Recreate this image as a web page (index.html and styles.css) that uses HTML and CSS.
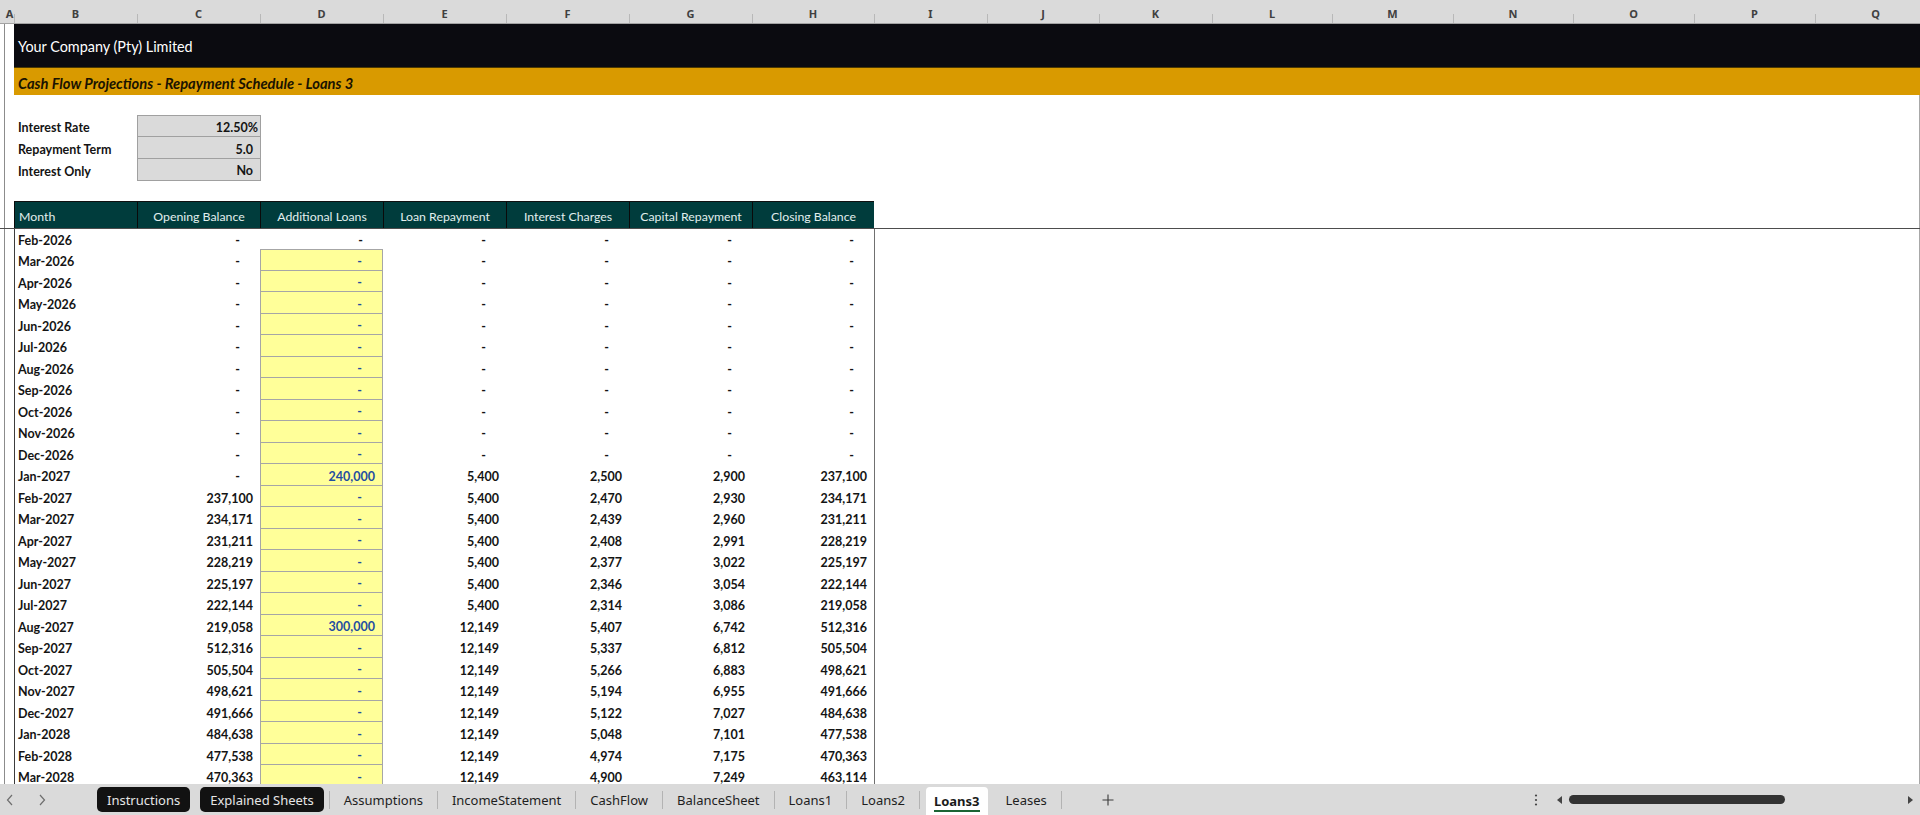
FILE: index.html
```html
<!DOCTYPE html>
<html>
<head>
<meta charset="utf-8">
<title>Loans3</title>
<link rel="stylesheet" href="styles.css">
</head>
<body>
<div class="app">
  <div class="colhead">
    <div class="ch w-a">A</div>
    <div class="ch w-b">B</div>
    <div class="ch w-c">C</div>
    <div class="ch w-c">D</div>
    <div class="ch w-c">E</div>
    <div class="ch w-c">F</div>
    <div class="ch w-c">G</div>
    <div class="ch w-h">H</div>
    <div class="ch w-i">I</div>
    <div class="ch w-j">J</div>
    <div class="ch w-i">K</div>
    <div class="ch w-l">L</div>
    <div class="ch w-m">M</div>
    <div class="ch w-l">N</div>
    <div class="ch w-m">O</div>
    <div class="ch w-m">P</div>
    <div class="ch w-m">Q</div>
  </div>

  <div class="sheet">
    <div class="band-black">Your Company (Pty) Limited</div>
    <div class="band-gold">Cash Flow Projections - Repayment Schedule - Loans 3</div>

    <div class="params">
      <div class="prow"><div class="plabel">Interest Rate</div><div class="pval pfirst">12.50%</div></div>
      <div class="prow"><div class="plabel">Repayment Term</div><div class="pval pind">5.0</div></div>
      <div class="prow plast"><div class="plabel">Interest Only</div><div class="pval pind">No</div></div>
    </div>

    <div class="thead-wrap">
      <div class="thead">
        <div class="th th-left">Month</div>
        <div class="th">Opening Balance</div>
        <div class="th">Additional Loans</div>
        <div class="th">Loan Repayment</div>
        <div class="th">Interest Charges</div>
        <div class="th">Capital Repayment</div>
        <div class="th">Closing Balance</div>
      </div>
    </div>

    <div class="tbody">
      <div class="tr first"><div class="td m">Feb-2026</div><div class="td z">-</div><div class="td z">-</div><div class="td z">-</div><div class="td z">-</div><div class="td z">-</div><div class="td z">-</div></div>
      <div class="tr"><div class="td m">Mar-2026</div><div class="td z">-</div><div class="td y yt z">-</div><div class="td z">-</div><div class="td z">-</div><div class="td z">-</div><div class="td z">-</div></div>
      <div class="tr"><div class="td m">Apr-2026</div><div class="td z">-</div><div class="td y z">-</div><div class="td z">-</div><div class="td z">-</div><div class="td z">-</div><div class="td z">-</div></div>
      <div class="tr"><div class="td m">May-2026</div><div class="td z">-</div><div class="td y z">-</div><div class="td z">-</div><div class="td z">-</div><div class="td z">-</div><div class="td z">-</div></div>
      <div class="tr"><div class="td m">Jun-2026</div><div class="td z">-</div><div class="td y z">-</div><div class="td z">-</div><div class="td z">-</div><div class="td z">-</div><div class="td z">-</div></div>
      <div class="tr"><div class="td m">Jul-2026</div><div class="td z">-</div><div class="td y z">-</div><div class="td z">-</div><div class="td z">-</div><div class="td z">-</div><div class="td z">-</div></div>
      <div class="tr"><div class="td m">Aug-2026</div><div class="td z">-</div><div class="td y z">-</div><div class="td z">-</div><div class="td z">-</div><div class="td z">-</div><div class="td z">-</div></div>
      <div class="tr"><div class="td m">Sep-2026</div><div class="td z">-</div><div class="td y z">-</div><div class="td z">-</div><div class="td z">-</div><div class="td z">-</div><div class="td z">-</div></div>
      <div class="tr"><div class="td m">Oct-2026</div><div class="td z">-</div><div class="td y z">-</div><div class="td z">-</div><div class="td z">-</div><div class="td z">-</div><div class="td z">-</div></div>
      <div class="tr"><div class="td m">Nov-2026</div><div class="td z">-</div><div class="td y z">-</div><div class="td z">-</div><div class="td z">-</div><div class="td z">-</div><div class="td z">-</div></div>
      <div class="tr"><div class="td m">Dec-2026</div><div class="td z">-</div><div class="td y z">-</div><div class="td z">-</div><div class="td z">-</div><div class="td z">-</div><div class="td z">-</div></div>
      <div class="tr"><div class="td m">Jan-2027</div><div class="td z">-</div><div class="td y n">240,000</div><div class="td n">5,400</div><div class="td n">2,500</div><div class="td n">2,900</div><div class="td n">237,100</div></div>
      <div class="tr"><div class="td m">Feb-2027</div><div class="td n">237,100</div><div class="td y z">-</div><div class="td n">5,400</div><div class="td n">2,470</div><div class="td n">2,930</div><div class="td n">234,171</div></div>
      <div class="tr"><div class="td m">Mar-2027</div><div class="td n">234,171</div><div class="td y z">-</div><div class="td n">5,400</div><div class="td n">2,439</div><div class="td n">2,960</div><div class="td n">231,211</div></div>
      <div class="tr"><div class="td m">Apr-2027</div><div class="td n">231,211</div><div class="td y z">-</div><div class="td n">5,400</div><div class="td n">2,408</div><div class="td n">2,991</div><div class="td n">228,219</div></div>
      <div class="tr"><div class="td m">May-2027</div><div class="td n">228,219</div><div class="td y z">-</div><div class="td n">5,400</div><div class="td n">2,377</div><div class="td n">3,022</div><div class="td n">225,197</div></div>
      <div class="tr"><div class="td m">Jun-2027</div><div class="td n">225,197</div><div class="td y z">-</div><div class="td n">5,400</div><div class="td n">2,346</div><div class="td n">3,054</div><div class="td n">222,144</div></div>
      <div class="tr"><div class="td m">Jul-2027</div><div class="td n">222,144</div><div class="td y z">-</div><div class="td n">5,400</div><div class="td n">2,314</div><div class="td n">3,086</div><div class="td n">219,058</div></div>
      <div class="tr"><div class="td m">Aug-2027</div><div class="td n">219,058</div><div class="td y n">300,000</div><div class="td n">12,149</div><div class="td n">5,407</div><div class="td n">6,742</div><div class="td n">512,316</div></div>
      <div class="tr"><div class="td m">Sep-2027</div><div class="td n">512,316</div><div class="td y z">-</div><div class="td n">12,149</div><div class="td n">5,337</div><div class="td n">6,812</div><div class="td n">505,504</div></div>
      <div class="tr"><div class="td m">Oct-2027</div><div class="td n">505,504</div><div class="td y z">-</div><div class="td n">12,149</div><div class="td n">5,266</div><div class="td n">6,883</div><div class="td n">498,621</div></div>
      <div class="tr"><div class="td m">Nov-2027</div><div class="td n">498,621</div><div class="td y z">-</div><div class="td n">12,149</div><div class="td n">5,194</div><div class="td n">6,955</div><div class="td n">491,666</div></div>
      <div class="tr"><div class="td m">Dec-2027</div><div class="td n">491,666</div><div class="td y z">-</div><div class="td n">12,149</div><div class="td n">5,122</div><div class="td n">7,027</div><div class="td n">484,638</div></div>
      <div class="tr"><div class="td m">Jan-2028</div><div class="td n">484,638</div><div class="td y z">-</div><div class="td n">12,149</div><div class="td n">5,048</div><div class="td n">7,101</div><div class="td n">477,538</div></div>
      <div class="tr"><div class="td m">Feb-2028</div><div class="td n">477,538</div><div class="td y z">-</div><div class="td n">12,149</div><div class="td n">4,974</div><div class="td n">7,175</div><div class="td n">470,363</div></div>
      <div class="tr"><div class="td m">Mar-2028</div><div class="td n">470,363</div><div class="td y z">-</div><div class="td n">12,149</div><div class="td n">4,900</div><div class="td n">7,249</div><div class="td n">463,114</div></div>
    </div>
  </div>

  <div class="tabbar">
    <div class="navs">
      <svg class="chev" width="8" height="12" viewBox="0 0 8 12"><polyline points="6,1 1.5,6 6,11" fill="none" stroke="#6e6e6e" stroke-width="1.2"/></svg>
      <svg class="chev chev2" width="8" height="12" viewBox="0 0 8 12"><polyline points="2,1 6.5,6 2,11" fill="none" stroke="#6e6e6e" stroke-width="1.2"/></svg>
    </div>
    <div class="tab dark">Instructions</div>
    <div class="tab dark dark2">Explained Sheets</div>
    <div class="sep"></div>
    <div class="tab">Assumptions</div>
    <div class="sep"></div>
    <div class="tab">IncomeStatement</div>
    <div class="sep"></div>
    <div class="tab">CashFlow</div>
    <div class="sep"></div>
    <div class="tab">BalanceSheet</div>
    <div class="sep"></div>
    <div class="tab">Loans1</div>
    <div class="sep"></div>
    <div class="tab">Loans2</div>
    <div class="sep"></div>
    <div class="tab active"><span class="active-label">Loans3</span></div>
    <div class="tab leases">Leases</div>
    <div class="sep"></div>
    <div class="plus">
      <svg width="12" height="12" viewBox="0 0 12 12"><path d="M6 0.5V11.5M0.5 6H11.5" stroke="#3a3a3a" stroke-width="1.1" fill="none"/></svg>
    </div>
    <div class="spacer"></div>
    <div class="scroll">
      <svg class="vdots" width="4" height="14" viewBox="0 0 4 14"><circle cx="2" cy="2.5" r="1.1" fill="#444"/><circle cx="2" cy="7" r="1.1" fill="#444"/><circle cx="2" cy="11.5" r="1.1" fill="#444"/></svg>
      <svg class="tri-l" width="5" height="8" viewBox="0 0 5 8"><polygon points="5,0 0,4 5,8" fill="#444"/></svg>
      <div class="thumb"></div>
      <div class="spacer"></div>
      <svg class="tri-r" width="5" height="8" viewBox="0 0 5 8"><polygon points="0,0 5,4 0,8" fill="#444"/></svg>
    </div>
  </div>
</div>
</body>
</html>
```

FILE: styles.css
```css
* { box-sizing: border-box; }
html, body { margin: 0; padding: 0; }
body {
  width: 1920px;
  height: 815px;
  overflow: hidden;
  background: #ffffff;
  font-family: Lato, "Open Sans", sans-serif;
  color: #141414;
}
.app { display: flex; flex-direction: column; height: 815px; }

/* column letters */
.colhead {
  flex: 0 0 24px;
  display: flex;
  overflow: hidden;
  background: #dadada;
  border-bottom: 1px solid #a3a3a3;
}
.ch {
  position: relative;
  flex: 0 0 auto;
  display: flex;
  align-items: flex-end;
  justify-content: center;
  padding-bottom: 2px;
  font-family: "Noto Sans", sans-serif;
  font-weight: 700;
  font-size: 11px;
  color: #404040;
}
.ch::before {
  content: "";
  position: absolute;
  left: 0;
  bottom: 0;
  width: 1px;
  height: 9px;
  background: #b8b8b8;
}
.w-a { width: 14px; padding-left: 5px; }
.w-a::before { display: none; }
.w-b { width: 123px; }
.w-c { width: 123px; }
.w-h { width: 122px; }
.w-i { width: 113px; }
.w-j { width: 112px; }
.w-l { width: 120px; }
.w-m { width: 121px; }

/* sheet body */
.sheet {
  flex: 1 1 auto;
  overflow: hidden;
  background:
    linear-gradient(#8c8c8c, #8c8c8c) 4px 0 / 1px 100% no-repeat,
    linear-gradient(#a8a8a8, #a8a8a8) 1919px 0 / 1px 100% no-repeat,
    #ffffff;
}
.band-black {
  margin-left: 14px;
  height: 43px;
  background: #0b0b10;
  color: #ffffff;
  display: flex;
  align-items: center;
  padding: 2px 0 0 4px;
  font-size: 14.4px;
}
.band-gold {
  margin-left: 14px;
  height: 28px;
  background: #d99a00;
  border-top: 1px solid #4d3a00;
  color: #1a1300;
  display: flex;
  align-items: center;
  padding: 2px 0 0 4px;
  font-size: 14.7px;
  font-style: italic;
  font-weight: 700;
}

.params { margin-top: 20px; }
.prow { display: flex; height: 22px; padding-left: 14px; }
.prow.plast { height: 21.5px; }
.plabel {
  width: 123px;
  padding: 3px 0 0 4px;
  display: flex;
  align-items: center;
  font-weight: 700;
  font-size: 12.5px;
}
.pval {
  width: 124px;
  background: #dadada;
  border: 1px solid #a0a0a0;
  border-top: none;
  display: flex;
  align-items: center;
  justify-content: flex-end;
  padding: 3px 2px 0 0;
  font-weight: 700;
  font-size: 12.5px;
}
.pval.pfirst { border-top: 1px solid #a0a0a0; }
.pval.pind { padding-right: 7px; }

.thead-wrap {
  margin-top: 20px;
  padding-left: 14px;
  border-bottom: 1px solid #4d4d4d;
}
.thead {
  display: grid;
  grid-template-columns: 123px 123px 123px 123px 123px 123px 122px;
  width: 860px;
  height: 27px;
  border-top: 1px solid #101010;
}
.th {
  background: #003c3c;
  color: #e2efee;
  border-left: 1px solid #0a0a0a;
  display: flex;
  align-items: center;
  justify-content: center;
  padding-top: 3px;
  font-size: 12.3px;
  white-space: nowrap;
}
.th-left { justify-content: flex-start; padding-left: 4px; }

.tbody {
  margin-left: 14px;
  width: 861px;
  height: 600px;
  border-left: 1px solid #3c3c3c;
  border-right: 1px solid #707070;
}
.tr {
  display: grid;
  grid-template-columns: 122px 123px 123px 123px 123px 123px 122px;
  height: 21.5px;
}
.tr.first { height: 20.5px; }
.td {
  display: flex;
  align-items: center;
  padding-top: 4px;
  font-weight: 700;
  font-size: 12.5px;
  white-space: nowrap;
}
.td.m { padding-left: 3px; }
.td.n { justify-content: flex-end; padding-right: 7px; }
.td.z { justify-content: flex-end; padding-right: 20px; }
.td.y {
  background: #ffff99;
  color: #1f4ea1;
  border-left: 1px solid #a6a6a6;
  border-right: 1px solid #a6a6a6;
  border-bottom: 1px solid #a6a6a6;
}
.td.y.yt { border-top: 1px solid #a6a6a6; }

/* sheet tabs */
.tabbar {
  flex: 0 0 31px;
  display: flex;
  align-items: center;
  background: #dadada;
  font-family: "Noto Sans", sans-serif;
  font-size: 13px;
  color: #1e1e1e;
}
.navs { display: flex; align-items: center; width: 97px; padding-left: 6px; }
.chev2 { margin-left: 24px; }
.tab {
  height: 25px;
  display: flex;
  align-items: center;
  padding: 0 14px;
  white-space: nowrap;
}
.tab.dark {
  background: #121212;
  color: #e6e6e6;
  border-radius: 5px;
  padding: 0 10px;
}
.tab.dark2 { margin-left: 10px; }
.sep { width: 1px; height: 18px; background: #b3b3b3; }
.tab.dark2 + .sep { margin-left: 5px; }
.tab.active {
  height: 28px;
  margin-left: 6px;
  margin-top: 3px;
  padding: 0 8px;
  background: #ffffff;
  border-radius: 4px 4px 0 0;
  font-weight: 700;
  color: #1a1a1a;
}
.active-label {
  padding-top: 2px;
  border-bottom: 2px solid #1b6535;
  line-height: 17px;
}
.tab.leases { margin-left: 4px; }
.plus { margin-left: 40px; display: flex; align-items: center; }
.spacer { flex: 1 1 auto; }
.scroll { width: 386px; display: flex; align-items: center; }
.tri-l { margin-left: 19px; }
.thumb {
  margin-left: 7px;
  width: 216px;
  height: 9px;
  border-radius: 5px;
  background: #333333;
}
.tri-r { margin-right: 7px; }
```
